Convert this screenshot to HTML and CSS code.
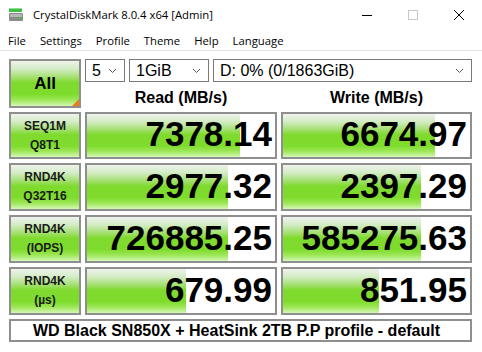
FILE: index.html
```html
<!DOCTYPE html>
<html lang="en">
<head>
    <meta charset="UTF-8">
    <title>CrystalDiskMark 8.0.4 x64 [Admin]</title>
    <link rel="stylesheet" href="styles.css">
</head>
<body>
    <div class="titlebar">
        <svg class="app-icon" width="16" height="16" viewBox="0 0 16 16">
            <rect x="1" y="1" width="13" height="4" fill="#3fbf3f"/>
            <rect x="1" y="1" width="13" height="1" fill="#8de08d"/>
            <rect x="1" y="6" width="14" height="8" rx="1" fill="#8a8a8a"/>
            <rect x="2" y="7" width="12" height="3" fill="#b5b5b5"/>
            <rect x="10" y="10" width="3" height="2" fill="#3fbf3f"/>
        </svg>
        <span class="title">CrystalDiskMark 8.0.4 x64 [Admin]</span>
        <div class="controls">
            <span class="ctl"><svg width="12" height="12" viewBox="0 0 12 12"><line x1="1" y1="6.5" x2="11" y2="6.5" stroke="#000" stroke-width="1"/></svg></span>
            <span class="ctl"><svg width="12" height="12" viewBox="0 0 12 12"><rect x="1.5" y="1.5" width="9" height="9" fill="none" stroke="#c8c8c8" stroke-width="1"/></svg></span>
            <span class="ctl"><svg width="12" height="12" viewBox="0 0 12 12"><path d="M1 1 L11 11 M11 1 L1 11" stroke="#000" stroke-width="1"/></svg></span>
        </div>
    </div>

    <div class="menubar">
        <span>File</span>
        <span>Settings</span>
        <span>Profile</span>
        <span>Theme</span>
        <span>Help</span>
        <span>Language</span>
    </div>

    <main class="panel">
        <div class="all-btn green">All</div>
        <div class="selects">
            <div class="combo c-count">5<svg class="chev" width="9" height="6" viewBox="0 0 9 6"><polyline points="1,1 4.5,4.5 8,1" fill="none" stroke="#555" stroke-width="1"/></svg></div>
            <div class="combo c-size">1GiB<svg class="chev" width="9" height="6" viewBox="0 0 9 6"><polyline points="1,1 4.5,4.5 8,1" fill="none" stroke="#555" stroke-width="1"/></svg></div>
            <div class="combo c-drive">D: 0% (0/1863GiB)<svg class="chev" width="9" height="6" viewBox="0 0 9 6"><polyline points="1,1 4.5,4.5 8,1" fill="none" stroke="#555" stroke-width="1"/></svg></div>
        </div>
        <div class="head">Read (MB/s)</div>
        <div class="head">Write (MB/s)</div>

        <div class="label green">SEQ1M<br>Q8T1</div>
        <div class="value" style="background-size: 153px 100%">7378.14</div>
        <div class="value" style="background-size: 152px 100%">6674.97</div>

        <div class="label green">RND4K<br>Q32T16</div>
        <div class="value" style="background-size: 141px 100%">2977.32</div>
        <div class="value" style="background-size: 138px 100%">2397.29</div>

        <div class="label green">RND4K<br>(IOPS)</div>
        <div class="value" style="background-size: 141px 100%">726885.25</div>
        <div class="value" style="background-size: 138px 100%">585275.63</div>

        <div class="label green">RND4K<br>(µs)</div>
        <div class="value" style="background-size: 99px 100%">679.99</div>
        <div class="value" style="background-size: 96px 100%">851.95</div>

        <div class="comment">WD Black SN850X + HeatSink 2TB P.P profile - default</div>
    </main>
</body>
</html>
```

FILE: styles.css
```css
body {
    margin: 0;
    width: 482px;
    height: 352px;
    background: #fff;
    font-family: "Liberation Sans", Arial, sans-serif;
    color: #000;
    overflow: hidden;
}
.titlebar {
    height: 30px;
    display: flex;
    align-items: center;
    font-family: "Open Sans", "Noto Sans", sans-serif;
    font-size: 11.3px;
}
.app-icon {
    margin-left: 8px;
    margin-right: 9px;
}
.title {
    flex: 1;
    margin-top: -1px;
}
.controls {
    display: flex;
    height: 30px;
}
.ctl {
    width: 46px;
    display: flex;
    align-items: center;
    justify-content: center;
}
.menubar {
    height: 20px;
    display: flex;
    align-items: center;
    padding-left: 1px;
    border-bottom: 1px solid #e3e3e3;
    font-family: "Open Sans", "Noto Sans", sans-serif;
    font-size: 11.3px;
}
.menubar span {
    padding: 0 7px;
}
.panel {
    display: grid;
    grid-template-columns: 72px 192px 191px;
    grid-template-rows: 23px 22px 47px 48px 48px 48px 23px;
    column-gap: 4px;
    row-gap: 4px;
    padding: 8px 10px 0 9px;
}
.green {
    background: linear-gradient(to bottom, #eef3ec 0%, #d3ecc4 18%, #a4e070 36%, #7fda2e 48%, #7edc2c 74%, #9be655 86%, #d4f8b4 100%);
}
.all-btn {
    grid-row: 1 / span 2;
    position: relative;
    border: 2px solid #8f8f8f;
    display: flex;
    align-items: center;
    justify-content: center;
    font-weight: bold;
    font-size: 17px;
}
.all-btn::after {
    content: "";
    position: absolute;
    right: 0;
    bottom: 0;
    border-style: solid;
    border-width: 0 0 7px 7px;
    border-color: transparent transparent #f07a1a transparent;
}
.selects {
    grid-column: 2 / span 2;
    display: flex;
    gap: 4px;
}
.combo {
    box-sizing: border-box;
    height: 23px;
    border: 1px solid #7a7a7a;
    display: flex;
    align-items: center;
    justify-content: space-between;
    padding: 0 7px 0 6px;
    font-size: 16px;
}
.c-count {
    width: 40px;
}
.c-size {
    width: 80px;
}
.c-drive {
    flex: 1;
}
.head {
    display: flex;
    align-items: center;
    justify-content: center;
    font-weight: bold;
    font-size: 16px;
    padding-top: 1px;
}
.label {
    box-sizing: border-box;
    border: 2px solid #8f8f8f;
    display: flex;
    align-items: center;
    justify-content: center;
    text-align: center;
    font-weight: bold;
    font-size: 12px;
    line-height: 19px;
    color: #1a1a1a;
}
.value {
    box-sizing: border-box;
    border: 2px solid #8f8f8f;
    background-color: #fff;
    background-image: linear-gradient(to bottom, #eef3ec 0%, #d3ecc4 18%, #a4e070 36%, #7fda2e 48%, #7edc2c 74%, #9be655 86%, #d4f8b4 100%);
    background-repeat: no-repeat;
    display: flex;
    align-items: center;
    justify-content: flex-end;
    padding: 0 3px 3px 0;
    font-weight: bold;
    font-size: 35px;
}
.comment {
    grid-column: 1 / span 3;
    box-sizing: border-box;
    border: 2px solid #8f8f8f;
    display: flex;
    align-items: center;
    justify-content: center;
    padding-right: 8px;
    font-weight: bold;
    font-size: 16px;
}
```
